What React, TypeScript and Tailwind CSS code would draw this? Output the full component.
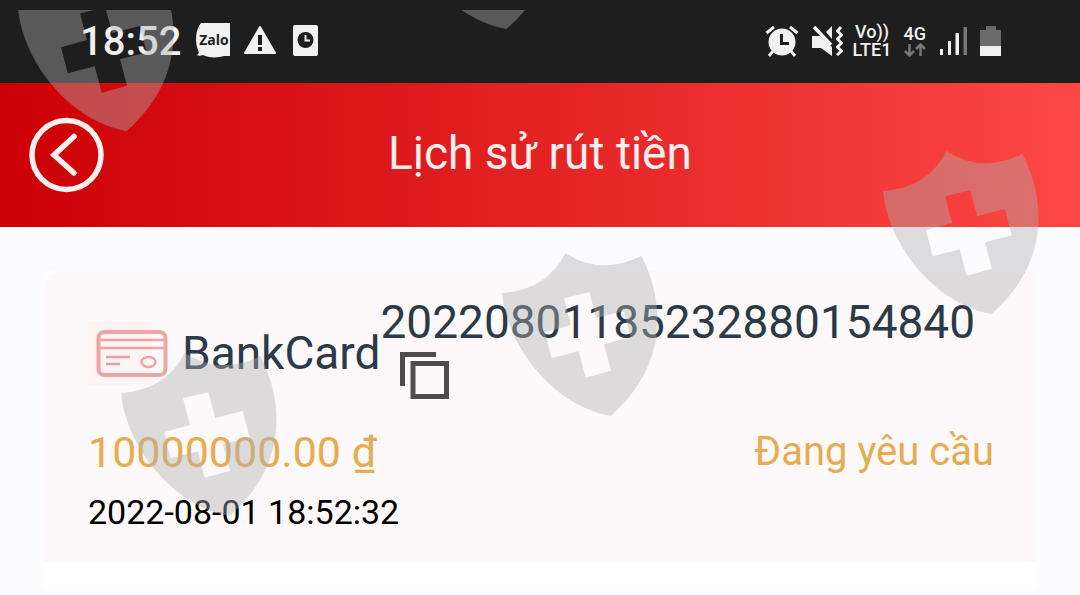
import type { ReactNode } from 'react';

type WithdrawalRecord = {
  method: string;
  orderId: string;
  amount: string;
  status: string;
  createdAt: string;
};

const records: WithdrawalRecord[] = [
  {
    method: 'BankCard',
    orderId: '20220801185232880154840',
    amount: '10000000.00',
    status: 'Đang yêu cầu',
    createdAt: '2022-08-01 18:52:32',
  },
];

function ZaloIcon() {
  return (
    <svg viewBox="0 0 36 36" className="h-9 w-9" aria-label="Zalo">
      <path d="M6 1H35V34H29C23 36 13 36 8 33C6 34 3 34 2 33C4 32 4 30 3 28C0 21 0 8 6 1Z" fill="#f1f1f1" />
      <text x="19" y="23" textAnchor="middle" fontSize="14" fontWeight="700" fontFamily="Open Sans, sans-serif" fill="#1e1e1e">Zalo</text>
    </svg>
  );
}

function WarningIcon() {
  return (
    <svg viewBox="0 0 34 30" className="h-[30px] w-[34px]" aria-hidden="true">
      <path d="M17 2L32 28H2Z" fill="#f1f1f1" stroke="#f1f1f1" strokeWidth="2" strokeLinejoin="round" />
      <path d="M15 10H19V20H15ZM15 22H19V26H15Z" fill="#1e1e1e" />
    </svg>
  );
}

function ClockCardIcon() {
  return (
    <svg viewBox="0 0 26 32" className="h-8 w-[26px]" aria-hidden="true">
      <rect x="0" y="1" width="25" height="31" rx="2" fill="#f1f1f1" />
      <circle cx="12.5" cy="16" r="8" fill="#1e1e1e" />
      <path d="M12.5 11V16.5H17" fill="none" stroke="#f1f1f1" strokeWidth="2" />
    </svg>
  );
}

function AlarmIcon() {
  return (
    <svg viewBox="0 0 34 32" className="h-8 w-[34px]" fill="none" aria-hidden="true">
      <circle cx="17" cy="17" r="13.5" fill="#f1f1f1" />
      <path d="M1.500 8L9 2M32.500 8L25 2M8 26L4 31M26 26L30 31" stroke="#f1f1f1" strokeWidth="3" />
      <path d="M16.500 9V18.500H24" stroke="#1e1e1e" strokeWidth="3" />
    </svg>
  );
}

function MuteVibrateIcon() {
  return (
    <svg viewBox="0 0 34 32" className="h-8 w-[34px]" fill="none" aria-hidden="true">
      <path d="M1 11H9L21 22V31L10 23H1Z" fill="#f1f1f1" />
      <path d="M15 7L21 1V14Z" fill="#f1f1f1" />
      <path d="M3 2L20 20" stroke="#f1f1f1" strokeWidth="3.500" />
      <path d="M30 2L26.500 6L30.500 10L26.500 14L30.500 18L26.500 22L30.500 26L26 30" stroke="#f1f1f1" strokeWidth="3" strokeLinejoin="round" />
    </svg>
  );
}

function DataArrowsIcon() {
  return (
    <svg viewBox="0 0 22 14" className="h-3.5 w-[22px]" fill="none" stroke="#777" strokeWidth="2.500" aria-hidden="true">
      <path d="M5.500 1V12M1 8L5.500 12.500L10 8M16.500 13V2M12 6L16.500 1.500L21 6" />
    </svg>
  );
}

function SignalIcon() {
  return (
    <svg viewBox="0 0 28 30" className="h-[30px] w-7" aria-hidden="true">
      <path d="M0 23H3V29H0ZM8 15H11V29H8ZM15.500 7H19V29H15.500Z" fill="#f1f1f1" />
      <path d="M23.500 1H27V29H23.500Z" fill="#777" />
    </svg>
  );
}

function BatteryIcon() {
  return (
    <svg viewBox="0 0 22 32" className="h-8 w-[22px]" aria-hidden="true">
      <path d="M6 1H16V5H21V21H0V5H6Z" fill="#6b6b6b" />
      <path d="M0 21H21V31H0Z" fill="#f1f1f1" />
    </svg>
  );
}

function StatusBar() {
  return (
    <div className="flex h-[83px] items-center justify-between bg-[#1e1e1e] pr-[78px] pl-20 text-[#f1f1f1]">
      <div className="flex items-center">
        <span className="mr-3.5 text-[40px] leading-[44px] font-medium">18:52</span>
        <div className="flex items-center gap-3 pb-1">
          <ZaloIcon />
          <WarningIcon />
          <span className="pl-1"><ClockCardIcon /></span>
        </div>
      </div>
      <div className="flex items-center pb-0.5">
        <span className="mr-3"><AlarmIcon /></span>
        <span className="mr-2"><MuteVibrateIcon /></span>
        <span className="mr-3 flex flex-col items-center text-[18px] leading-[18px] font-medium">
          <span>Vo))</span>
          <span>LTE1</span>
        </span>
        <span className="mr-3.5 flex flex-col items-center text-[18px] leading-[18px] font-medium">
          <span>4G</span>
          <DataArrowsIcon />
        </span>
        <span className="mr-3"><SignalIcon /></span>
        <BatteryIcon />
      </div>
    </div>
  );
}

function PageHeader({ title }: { title: string }) {
  return (
    <header className="flex h-36 items-center bg-linear-to-r/srgb from-[#cc0005] via-[#e32323] to-[#fc4845] px-7">
      <button type="button" aria-label="Back" className="w-[76px]">
        <svg viewBox="0 0 76 76" className="h-[76px] w-[76px]" fill="none" stroke="#fff0f0" strokeLinecap="round" aria-hidden="true">
          <circle cx="38.500" cy="38" r="34.500" strokeWidth="5.500" />
          <path d="M46 19.500L26 38L46 56" strokeWidth="5.500" strokeLinejoin="miter" />
        </svg>
      </button>
      <h1 className="flex-1 pb-1 text-center text-[46px] leading-none text-[#fbeeee]">{title}</h1>
      <span className="w-[76px]" />
    </header>
  );
}

function BankCardIcon() {
  return (
    <svg viewBox="0 0 84 64" className="h-16 w-[84px]" fill="none" stroke="#eda5a5" aria-hidden="true">
      <rect width="64" height="64" fill="#fff3f4" stroke="none" />
      <rect x="10.500" y="11" width="67" height="43" rx="6" strokeWidth="4" />
      <path d="M12 19H76M12 27H76" strokeWidth="2.500" />
      <path d="M18 36H42M18 43H32" strokeWidth="2.500" stroke="#e0a3a3" />
      <ellipse cx="60.500" cy="41" rx="7" ry="5" strokeWidth="2.500" />
    </svg>
  );
}

function CopyIcon() {
  return (
    <svg viewBox="0 0 50 48" className="h-12 w-[50px]" fill="none" stroke="#514b4d" strokeWidth="5" aria-hidden="true">
      <path d="M2.500 34V2.500H36" />
      <rect x="13" y="11.500" width="33.500" height="33" />
    </svg>
  );
}

function RecordCard({ record }: { record: WithdrawalRecord }) {
  return (
    <li className="bg-white pb-7">
      <article className="rounded-tl-2xl bg-[#fdf9fa] pt-[25px] pr-[42px] pb-5 pl-11">
        <div className="flex items-center text-[46px] text-[#2c3a47]">
          <BankCardIcon />
          <span className="ml-2.5">{record.method}</span>
          <div className="pb-2.5 leading-[52px]">
            <p>{record.orderId}</p>
            <button type="button" aria-label="Copy" className="mt-1 ml-5 block">
              <CopyIcon />
            </button>
          </div>
        </div>
        <div className="mt-3 flex items-center justify-between text-[#e6ac50]">
          <p className="text-[43px] leading-[60px]">
            {record.amount} <span>₫</span>
          </p>
          <p className="text-[40px] leading-[60px]">{record.status}</p>
        </div>
        <time className="block text-[34px] leading-[60px] text-black">{record.createdAt}</time>
      </article>
    </li>
  );
}

function Shield({ className }: { className: string }) {
  return (
    <svg viewBox="0 0 158 166" className={`absolute h-[166px] w-[158px] ${className}`} fill="#aeaeae" fillOpacity="0.41" fillRule="evenodd">
      <path d="M0 41Q45 38 63.500 1Q98 24 139.500 4C162 48 168 112 108.500 164C52 154 5 95 0 41ZM62 46.300L87.300 40.300L94.300 66L121.700 59L128.700 85.300L102 92.300L109 118.700L83.700 125.700L76.700 99.300L49.700 106.300L43 80.300L69 73Z" />
    </svg>
  );
}

function ShieldOverlay({ children }: { children: ReactNode }) {
  return (
    <div className="pointer-events-none absolute inset-x-0 top-2.5 bottom-0 overflow-hidden" aria-hidden="true">
      {children}
    </div>
  );
}

export default function App() {
  return (
    <div className="relative min-h-screen overflow-hidden bg-[#fcfcff] font-[Roboto,sans-serif]">
      <StatusBar />
      <PageHeader title="Lịch sử rút tiền" />
      <main className="px-11 pt-11">
        <ul>
          {records.map((record) => (
            <RecordCard key={record.orderId} record={record} />
          ))}
        </ul>
      </main>
      <ShieldOverlay>
        <Shield className="-top-[43px] left-[18px]" />
        <Shield className="-top-[145px] left-[398px]" />
        <Shield className="top-[140px] left-[883px]" />
        <Shield className="top-[242px] left-[502px]" />
        <Shield className="top-[342px] left-[121px]" />
      </ShieldOverlay>
    </div>
  );
}
